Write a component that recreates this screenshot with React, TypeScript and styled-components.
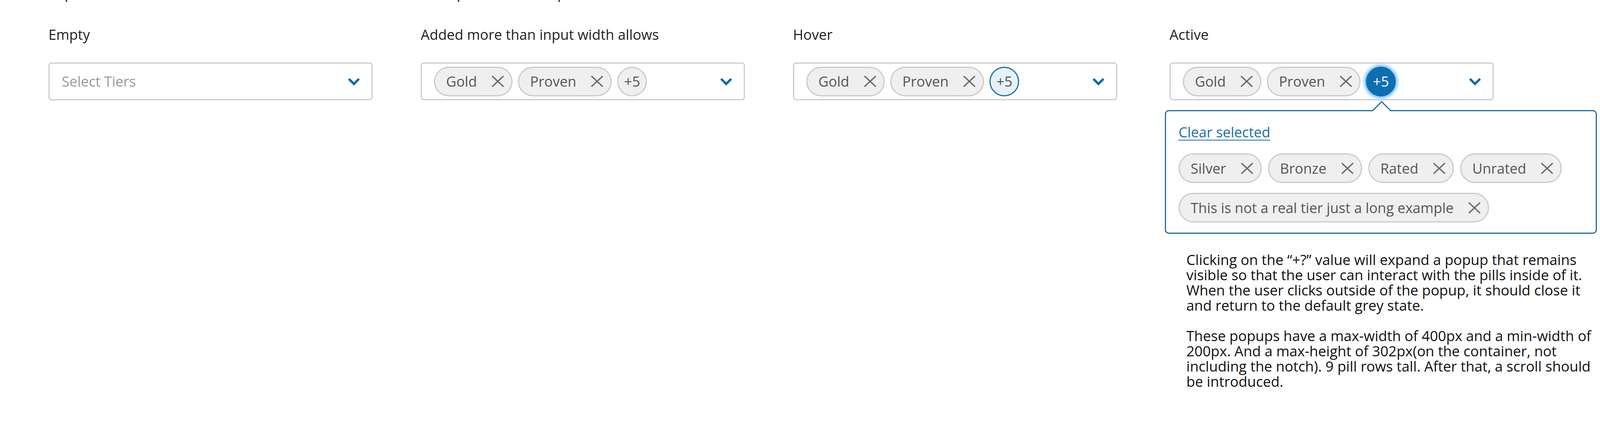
import React from 'react';
import styled, { createGlobalStyle, css } from 'styled-components';

const GlobalStyle = createGlobalStyle`
  html, body {
    margin: 0;
    padding: 0;
    background: #fff;
  }
  body {
    font-family: 'Open Sans', 'Liberation Sans', sans-serif;
    color: #222;
    overflow: hidden;
  }
`;

const Page = styled.div`
  display: grid;
  grid-template-columns: repeat(4, 830px);
  column-gap: 123px;
  align-items: start;
  padding-left: 124px;
`;

const Column = styled.section<{ $shift?: number }>`
  display: flex;
  flex-direction: column;
  margin-left: ${(p) => p.$shift ?? 0}px;
`;

const CutTitle = styled.div`
  margin-top: -39px;
  height: 43px;
  font-size: 36px;
  line-height: 43px;
  color: #222;
  white-space: nowrap;
`;

const Label = styled.div`
  margin: 63px 0 50px;
  font-size: 36px;
  line-height: 43px;
  color: #222;
`;

const SelectBox = styled.div`
  box-sizing: border-box;
  display: flex;
  align-items: center;
  gap: 14px;
  width: 830px;
  height: 97px;
  padding: 0 29px 0 31px;
  border: 3px solid #cdcdcd;
  border-radius: 8px;
  background: #fff;
`;

const Placeholder = styled.span`
  font-size: 36px;
  color: #9a9a9a;
`;

const Chevron = styled.svg`
  flex-shrink: 0;
  margin-left: auto;
`;

const Pill = styled.span`
  box-sizing: border-box;
  display: inline-flex;
  align-items: center;
  gap: 37px;
  height: 76px;
  padding: 0 18px 0 28px;
  border: 3px solid #cacaca;
  border-radius: 38px;
  background: #efefef;
  font-size: 36px;
  color: #555;
  white-space: nowrap;
`;

const RemoveGlyph = styled.svg`
  flex-shrink: 0;
`;

type MoreState = 'idle' | 'hover' | 'active';

const More = styled.span<{ $state: MoreState }>`
  box-sizing: border-box;
  display: inline-flex;
  align-items: center;
  justify-content: center;
  flex-shrink: 0;
  width: 76px;
  height: 76px;
  border-radius: 50%;
  font-size: 36px;
  border: 3px solid #cacaca;
  background: #efefef;
  color: #555;
  ${(p) =>
    p.$state === 'hover' &&
    css`
      border-color: #1a6fa8;
      background: #e6f2fb;
    `}
  ${(p) =>
    p.$state === 'active' &&
    css`
      border-color: #0d6fb0;
      background: #0d6fb0;
      color: #fff;
      box-shadow: 0 0 9px 4px #56b6f6;
    `}
`;

const Popup = styled.div`
  position: relative;
  box-sizing: border-box;
  width: 1106px;
  margin: 25px 0 0 -12px;
  padding: 32px 32px 26px;
  border: 3px solid #1b6fa8;
  border-radius: 10px;
  background: #fff;
`;

const Notch = styled.svg`
  position: absolute;
  top: -26px;
  left: 527px;
`;

const ClearLink = styled.a`
  display: inline-block;
  font-size: 36px;
  line-height: 43px;
  color: #1a6fa5;
  text-decoration: underline;
  text-decoration-thickness: 2px;
  text-underline-offset: 6px;
  cursor: pointer;
`;

const PillWrap = styled.div`
  display: flex;
  flex-wrap: wrap;
  column-gap: 16px;
  row-gap: 25px;
  margin-top: 33px;
`;

const Notes = styled.div`
  margin: 47px 0 0 43px;
  font-size: 36.5px;
  line-height: 39px;
  color: #111;
  white-space: nowrap;

  p {
    margin: 0 0 39px;
  }
`;

const ChevronDown = () => (
  <Chevron width="32" height="20" viewBox="0 0 32 20">
    <path d="M3 3 L16 16 L29 3" fill="none" stroke="#0b6aa8" strokeWidth="6" />
  </Chevron>
);

const TierPill: React.FC<{ name: string }> = ({ name }) => (
  <Pill>
    {name}
    <RemoveGlyph width="33" height="31" viewBox="0 0 33 31">
      <path d="M2 2 L31 29 M31 2 L2 29" stroke="#6a6a6a" strokeWidth="3.5" />
    </RemoveGlyph>
  </Pill>
);

const TierSelect: React.FC<{ tiers?: string[]; more?: MoreState }> = ({ tiers = [], more }) => (
  <SelectBox>
    {tiers.length === 0 && <Placeholder>Select Tiers</Placeholder>}
    {tiers.map((t) => (
      <TierPill key={t} name={t} />
    ))}
    {more && <More $state={more}>+5</More>}
    <ChevronDown />
  </SelectBox>
);

const hidden = ['Silver', 'Bronze', 'Rated', 'Unrated', 'This is not a real tier just a long example'];
const shown = ['Gold', 'Proven'];

export default function App() {
  return (
    <>
      <GlobalStyle />
      <Page>
        <Column>
          <CutTitle>Top level states</CutTitle>
          <Label>Empty</Label>
          <TierSelect />
        </Column>

        <Column>
          <CutTitle>Example of a tier dropdown</CutTitle>
          <Label>Added more than input width allows</Label>
          <TierSelect tiers={shown} more="idle" />
        </Column>

        <Column>
          <CutTitle />
          <Label>Hover</Label>
          <TierSelect tiers={shown} more="hover" />
        </Column>

        <Column $shift={11}>
          <CutTitle />
          <Label>Active</Label>
          <TierSelect tiers={shown} more="active" />
          <Popup>
            <Notch width="50" height="26" viewBox="0 0 50 26">
              <rect x="4" y="22" width="42" height="4" fill="#fff" />
              <polygon points="2,26 25,2 48,26" fill="#fff" />
              <polyline points="2,24.5 25,1.5 48,24.5" fill="none" stroke="#1b6fa8" strokeWidth="3" />
            </Notch>
            <ClearLink>Clear selected</ClearLink>
            <PillWrap>
              {hidden.map((t) => (
                <TierPill key={t} name={t} />
              ))}
            </PillWrap>
          </Popup>
          <Notes>
            <p>
              Clicking on the “+?” value will expand a popup that remains
              <br />
              visible so that the user can interact with the pills inside of it.
              <br />
              When the user clicks outside of the popup, it should close it
              <br />
              and return to the default grey state.
            </p>
            <p>
              These popups have a max-width of 400px and a min-width of
              <br />
              200px. And a max-height of 302px(on the container, not
              <br />
              including the notch). 9 pill rows tall. After that, a scroll should
              <br />
              be introduced.
            </p>
          </Notes>
        </Column>
      </Page>
    </>
  );
}
